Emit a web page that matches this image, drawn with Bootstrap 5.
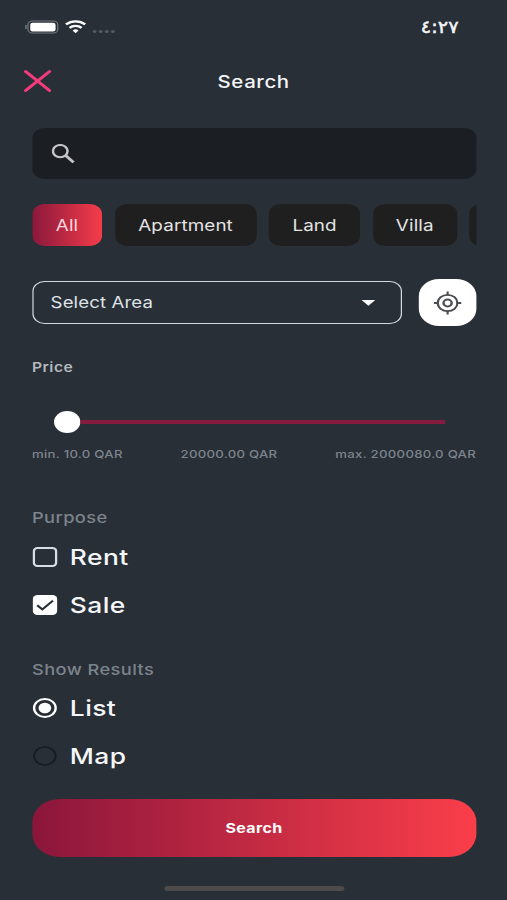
<!DOCTYPE html>
<html lang="en">
<head>
<meta charset="utf-8">
<meta name="viewport" content="width=device-width, initial-scale=1">
<title>Search</title>
<link href="https://cdn.jsdelivr.net/npm/bootstrap@5.3.0/dist/css/bootstrap.min.css" rel="stylesheet">
<style>
html,body{height:100%;overflow:hidden}
body{background:#282f37;font-family:Inter,"Liberation Sans",sans-serif;color:#f4f5f6}
.screen{width:422.5px;height:900px;transform:scaleX(1.2);transform-origin:0 0;padding:0 25.8px 0 26.67px;line-height:1}
.status{height:54px;margin-left:-6px}
.clock{font:400 17.5px/1.3 "DejaVu Sans",sans-serif;-webkit-text-stroke:.5px #f4f5f6;margin-right:14.5px;transform:scaleX(.92);transform-origin:100% 50%}
.topbar{height:54px;margin-left:-6.67px;margin-right:-6px}
.topbar h1{font-size:17px;font-weight:500;line-height:1;letter-spacing:.5px;padding-top:2px}
.side{width:24px}
.searchbox{height:51px;margin-top:20px;background:#1b1f24;border-radius:10px;padding-left:16px}
.chips{margin-top:25px;gap:10.5px;height:42px}
.chip{flex:none;height:42px;border:0;border-radius:10px;background:#1f1f1f;color:#e4e4e4;font-size:15.7px;padding:1.5px 0 0;line-height:1;letter-spacing:.1px}
.chip-all{width:58.5px;background:linear-gradient(90deg,#8b183c,#f53c4a);color:#ffd9dd}
.chip-apt{width:118px}.chip-land{width:76px}.chip-villa{width:70px}
.arearow{margin-top:33px;height:47px}
.area{width:308.5px;height:43px;border:1.3px solid #d5d8dc;border-radius:10px;background:none;color:#dfe2e6;font-size:15.5px;padding:1px 21.5px 0 14.5px;letter-spacing:.1px}
.locate{width:48px;height:47px;border-radius:17px;background:#fff}
.label-price{margin-top:35px;font-size:13px;font-weight:600;color:#b6babf;height:14px;letter-spacing:.4px}
.slider{margin-top:36px;height:22px;padding:0 26px 0 18px}
.knob{width:22px;height:22px;background:#fff}
.rail{height:4px;background:#851b3f}
.limits{margin-top:16px;font-size:11px;height:12px;color:#7d848c;font-weight:500;letter-spacing:.22px}
.group-title{font-size:15.2px;font-weight:500;color:#7d848c;height:16px;letter-spacing:.35px}
.group-purpose{margin-top:49px}
.group-results{margin-top:33px}
.opt{height:48px;font-size:22px;font-weight:500;gap:10.5px;color:#f5f6f7;letter-spacing:.35px}
.purpose-list{margin-top:7px}
.results-list{margin-top:6px}
.submit{height:58px;margin-top:19px;border:0;border-radius:23px;background:linear-gradient(90deg,#8b163b,#fa3e4a);color:#fff;font-size:13.3px;font-weight:700;letter-spacing:.3px;padding-top:2px}
.homebar{width:150px;height:5px;margin:29px auto 0;background:#4d4a4a}
</style>
</head>
<body>
<main class="screen d-flex flex-column">
  <div class="status d-flex align-items-center justify-content-between">
    <svg width="77" height="20" viewBox="0 0 77 20">
      <path d="M.6 8v4" stroke="#747980" stroke-width="1.4"/>
      <rect x="2.3" y="4" width="24.8" height="12" rx="3.5" fill="none" stroke="#747980"/>
      <rect x="4.2" y="5.7" width="21.1" height="8.8" rx="2" fill="#fff"/>
      <g fill="none" stroke="#fff" stroke-width="2.3"><path d="M34 7.4a12 12 0 0 1 16 0"/><path d="M37 10.9a7.4 7.4 0 0 1 10 0"/></g>
      <path d="M39.5 13.4a3.7 3.7 0 0 1 5 0L42 16.3z" fill="#fff"/>
      <g fill="#555b62"><circle cx="57.8" cy="14.5" r="1.6"/><circle cx="62.9" cy="14.5" r="1.6"/><circle cx="68" cy="14.5" r="1.6"/><circle cx="73" cy="14.5" r="1.6"/></g>
    </svg>
    <span class="clock">٤:٢٧</span>
  </div>
  <header class="topbar d-flex align-items-center justify-content-between">
    <svg width="24" height="24" viewBox="0 0 24 24"><path d="M1.4 2.5 21.2 21.5M21.2 2.5 1.4 21.5" stroke="#f33b7c" stroke-width="2.8" stroke-linecap="round"/></svg>
    <h1 class="m-0">Search</h1>
    <span class="side"></span>
  </header>
  <div class="searchbox d-flex align-items-center">
    <svg width="20" height="20" viewBox="0 0 20 20" fill="none" stroke="#c3c5c8" stroke-width="2.1"><circle cx="7.2" cy="7.1" r="6.1"/><path d="m11.6 11.4 6.7 7" stroke-width="2.6"/></svg>
  </div>
  <div class="chips d-flex overflow-hidden">
    <button class="chip chip-all">All</button>
    <button class="chip chip-apt">Apartment</button>
    <button class="chip chip-land">Land</button>
    <button class="chip chip-villa">Villa</button>
    <button class="chip chip-villa" aria-label="More"></button>
  </div>
  <div class="arearow d-flex align-items-center justify-content-between">
    <button class="area d-flex align-items-center justify-content-between"><span>Select Area</span>
      <svg width="12" height="6" viewBox="0 0 12 6"><path d="M.3 0h11.4L6 5.8z" fill="#fff"/></svg></button>
    <div class="locate d-flex align-items-center justify-content-center">
      <svg width="24" height="24" viewBox="0 0 24 24" fill="none" stroke="#4b4d50" stroke-width="1.8"><circle cx="12" cy="12" r="8.2"/><circle cx="12" cy="12" r="3.4" stroke-width="2"/><path d="M12 .6v4M12 19.4v4M.6 12h4M19.4 12h4"/></svg>
    </div>
  </div>
  <div class="label-price"><span>Price</span></div>
  <div class="slider d-flex align-items-center"><span class="knob rounded-circle flex-shrink-0"></span><span class="rail flex-grow-1"></span></div>
  <div class="limits d-flex justify-content-between"><span>min. 10.0 QAR</span><span>20000.00 QAR</span><span>max. 2000080.0 QAR</span></div>
  <div class="group-title group-purpose"><span>Purpose</span></div>
  <div class="purpose-list">
    <label class="opt d-flex align-items-center"><svg width="21" height="20" viewBox="0 0 21 20"><rect x="1.2" y="1" width="18.6" height="18" rx="3.2" fill="none" stroke="#d9dce0" stroke-width="2"/></svg><span>Rent</span></label>
    <label class="opt d-flex align-items-center"><svg width="21" height="20" viewBox="0 0 21 20"><rect x=".3" width="20.4" height="20" rx="4" fill="#fff"/><path d="m4 10.2 4.3 4.2 8.8-8.8" fill="none" stroke="#282f37" stroke-width="2"/></svg><span>Sale</span></label>
  </div>
  <div class="group-title group-results"><span>Show Results</span></div>
  <div class="results-list">
    <label class="opt d-flex align-items-center"><svg width="21" height="20" viewBox="0 0 21 20"><circle cx="10.4" cy="10" r="9" fill="none" stroke="#fff" stroke-width="2"/><circle cx="10.4" cy="10" r="5.3" fill="#fff"/></svg><span>List</span></label>
    <label class="opt d-flex align-items-center"><svg width="21" height="20" viewBox="0 0 21 20"><circle cx="10.4" cy="10" r="9" fill="none" stroke="#171c23" stroke-width="1.6"/></svg><span>Map</span></label>
  </div>
  <button class="submit w-100 flex-shrink-0">Search</button>
  <div class="homebar rounded-pill flex-shrink-0"></div>
</main>
<script src="https://cdn.jsdelivr.net/npm/bootstrap@5.3.0/dist/js/bootstrap.bundle.min.js"></script>
</body>
</html>
